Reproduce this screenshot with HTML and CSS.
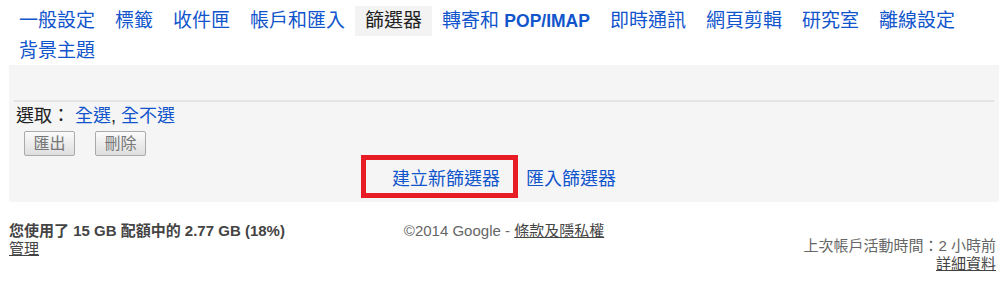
FILE: index.html
```html
<!DOCTYPE html>
<html lang="zh-TW">

<head>
    <meta charset="UTF-8">
    <meta name="viewport" content="width=device-width, initial-scale=1.0">
    <title>設定 - 篩選器</title>
    <link rel="stylesheet" href="styles.css">
</head>

<body>
    <div class="tabs">
        <a class="tab" href="#">一般設定</a>
        <a class="tab" href="#">標籤</a>
        <a class="tab" href="#">收件匣</a>
        <a class="tab" href="#">帳戶和匯入</a>
        <span class="tab active">篩選器</span>
        <a class="tab" href="#">轉寄和 <b class="latin">POP/IMAP</b></a>
        <a class="tab" href="#">即時通訊</a>
        <a class="tab" href="#">網頁剪輯</a>
        <a class="tab" href="#">研究室</a>
        <a class="tab" href="#">離線設定</a>
        <a class="tab" href="#">背景主題</a>
    </div>

    <div class="panel">
        <div class="panel-top"></div>
        <div class="divider"></div>
        <div class="select-row">
            選取： <a href="#">全選</a>, <a href="#">全不選</a>
        </div>
        <div class="actions">
            <button type="button">匯出</button>
            <button type="button">刪除</button>
        </div>
        <div class="filter-links">
            <span class="highlighted">
                <a href="#">建立新篩選器</a>
                <span class="mark"></span>
            </span>
            <a href="#">匯入篩選器</a>
        </div>
    </div>

    <div class="footer">
        <div class="quota">
            <b>您使用了 15 GB 配額中的 2.77 GB (18%)</b><br>
            <a href="#">管理</a>
        </div>
        <div class="legal">
            ©2014 Google - <a href="#">條款及隱私權</a>
        </div>
        <div class="activity">
            上次帳戶活動時間：2 小時前<br>
            <a href="#">詳細資料</a>
        </div>
    </div>
</body>

</html>
```

FILE: styles.css
```css
body {
    margin: 6px 4px 0 9px;
    font-family: "Liberation Sans", "Noto Sans CJK TC", sans-serif;
    background-color: #fff;
    color: #222;
}

a {
    color: #15c;
    text-decoration: none;
}

.tabs {
    display: flex;
    flex-wrap: wrap;
    font-size: 19px;
    line-height: 29px;
}

.tab {
    padding: 0 10px;
    white-space: nowrap;
}

.tab.active {
    background-color: #f3f3f3;
    color: #222;
}

.latin {
    font-size: 17.5px;
}

.panel {
    width: 990px;
    background-color: #f5f5f5;
    padding-bottom: 11px;
}

.panel-top {
    height: 22px;
    margin-right: -4px;
    background-color: #f5f5f5;
}

.divider {
    margin: 13px 5px 0;
    border-top: 2px solid #e4e4e4;
}

.select-row {
    margin-top: 2px;
    padding-left: 7px;
    font-size: 18px;
    line-height: 24px;
}

.actions {
    display: flex;
    gap: 20px;
    margin-top: 3px;
    padding-left: 15px;
}

button {
    width: 51px;
    height: 25px;
    padding: 0;
    border: 1px solid #aaa;
    border-radius: 2px;
    background: linear-gradient(#fbfbfb, #dedede);
    color: #777;
    font-family: "Liberation Sans", "Noto Sans CJK TC", sans-serif;
    font-size: 16px;
    line-height: 22px;
}

.filter-links {
    display: flex;
    justify-content: center;
    gap: 26px;
    margin-top: 11px;
    font-size: 18px;
    line-height: 24px;
}

.highlighted {
    position: relative;
}

.mark {
    position: absolute;
    top: -12px;
    left: -31px;
    right: -18px;
    bottom: -7px;
    border: 5px solid #e81c24;
}

.footer {
    display: grid;
    grid-template-columns: 1fr auto 1fr;
    width: 990px;
    padding-top: 20px;
    font-size: 15px;
    line-height: 18px;
    color: #666;
}

.footer a {
    color: #444;
    text-decoration: underline;
}

.quota b {
    color: #444;
}

.activity {
    margin-top: 15px;
    text-align: right;
    padding-right: 3px;
}
```
